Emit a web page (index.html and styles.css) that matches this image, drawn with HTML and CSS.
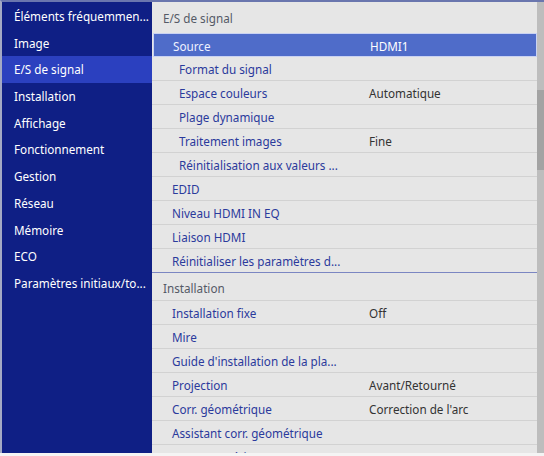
FILE: index.html
```html
<!DOCTYPE html>
<html lang="fr">
<head>
<meta charset="utf-8">
<link rel="stylesheet" href="styles.css">
</head>
<body>
<div class="frame">
  <nav class="side">
    <div class="side-item">Éléments fréquemmen...</div>
    <div class="side-item">Image</div>
    <div class="side-item active">E/S de signal</div>
    <div class="side-item">Installation</div>
    <div class="side-item">Affichage</div>
    <div class="side-item">Fonctionnement</div>
    <div class="side-item">Gestion</div>
    <div class="side-item">Réseau</div>
    <div class="side-item">Mémoire</div>
    <div class="side-item">ECO</div>
    <div class="side-item">Paramètres initiaux/to...</div>
  </nav>
  <main class="panel">
    <div class="list">
      <div class="head first">E/S de signal</div>
      <div class="row selected"><span class="label">Source</span><span class="value">HDMI1</span></div>
      <div class="row sub"><span class="label">Format du signal</span></div>
      <div class="row sub"><span class="label">Espace couleurs</span><span class="value">Automatique</span></div>
      <div class="row sub"><span class="label">Plage dynamique</span></div>
      <div class="row sub"><span class="label">Traitement images</span><span class="value">Fine</span></div>
      <div class="row sub"><span class="label">Réinitialisation aux valeurs ...</span></div>
      <div class="row"><span class="label">EDID</span></div>
      <div class="row"><span class="label">Niveau HDMI IN EQ</span></div>
      <div class="row"><span class="label">Liaison HDMI</span></div>
      <div class="row last"><span class="label">Réinitialiser les paramètres d...</span></div>
      <div class="head">Installation</div>
      <div class="row"><span class="label">Installation fixe</span><span class="value">Off</span></div>
      <div class="row"><span class="label">Mire</span></div>
      <div class="row"><span class="label">Guide d'installation de la pla...</span></div>
      <div class="row"><span class="label">Projection</span><span class="value">Avant/Retourné</span></div>
      <div class="row"><span class="label">Corr. géométrique</span><span class="value">Correction de l'arc</span></div>
      <div class="row"><span class="label">Assistant corr. géométrique</span></div>
      <div class="row"><span class="label">Zoom numérique</span><span class="slider"><i class="tick"></i><i class="tick"></i></span></div>
    </div>
    <div class="scrollbar"><div class="thumb"></div></div>
  </main>
</div>
<div class="bottom"></div>
</body>
</html>
```
FILE: styles.css
```css
html, body {
  margin: 0;
  padding: 0;
  background: #eeeeee;
  font-family: "Noto Sans", "Open Sans", sans-serif;
  font-size: 11.7px;
  overflow: hidden;
}
.frame {
  display: flex;
  height: 451px;
  border-top: 2px solid #6a76ae;
  border-left: 2px solid #a4a9c4;
  overflow: hidden;
}
.bottom {
  height: 3px;
  background: #f4f4f4;
}
.side {
  width: 150px;
  flex: none;
  background: #0f1f85;
  color: #ffffff;
  padding-top: 1px;
}
.side-item {
  height: 26.7px;
  line-height: 26.7px;
  padding-left: 12px;
  white-space: nowrap;
  overflow: hidden;
}
.side-item.active {
  background: #2b40bf;
}
.panel {
  flex: 1;
  display: flex;
  background: #e6e6e6;
  min-width: 0;
}
.list {
  width: 385px;
  flex: none;
}
.head {
  height: 28px;
  line-height: 30px;
  padding-left: 11px;
  color: #555a66;
  border-bottom: 1px solid #d2d2d2;
  box-sizing: border-box;
}
.head.first {
  height: 31px;
  line-height: 32px;
  border-bottom: none;
}
.row {
  display: flex;
  height: 24px;
  line-height: 25px;
  padding-left: 20px;
  border-bottom: 1px solid #d2d2d2;
  box-sizing: border-box;
  color: #2b3a9c;
  white-space: nowrap;
}
.row .label {
  width: 197px;
  flex: none;
}
.row.sub {
  padding-left: 27px;
}
.row.sub .label {
  width: 190px;
}
.row .value {
  color: #333333;
}
.row.selected {
  background: #4f6cc9;
  border: 1px solid #c9d2f2;
  color: #eef1ff;
  margin-left: 1px;
  line-height: 24px;
  padding-left: 19px;
}
.row.selected .value {
  color: #ffffff;
}
.row.last {
  border-bottom: 1px solid #7b86c2;
}
.slider {
  display: flex;
  gap: 8px;
  margin-left: 146px;
  align-items: flex-end;
}
.tick {
  display: block;
  width: 3px;
  height: 3px;
  background: #5b67b0;
}
.scrollbar {
  width: 7px;
  flex: none;
  background: #bdbdbd;
}
.thumb {
  margin-top: 88px;
  height: 80px;
  background: #a3a3a3;
}
```
